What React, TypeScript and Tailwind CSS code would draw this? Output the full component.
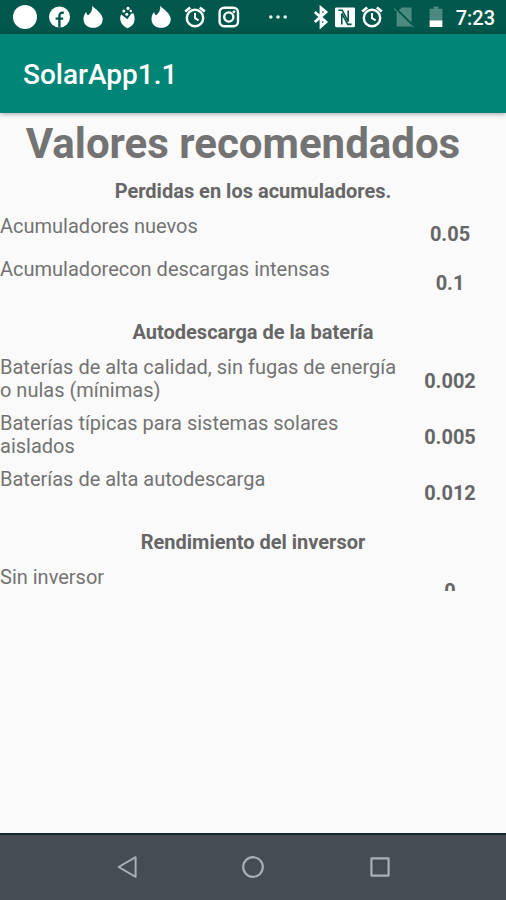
import type { ReactNode } from 'react';

type Row = { label: string; value: string; compact?: boolean };

const sections: { title: string; rows: Row[] }[] = [
  {
    title: "Perdidas en los acumuladores.",
    rows: [
      { label: "Acumuladores nuevos", value: "0.05", compact: true },
      { label: "Acumuladorecon descargas intensas", value: "0.1" }
    ]
  },
  {
    title: "Autodescarga de la batería",
    rows: [
      { label: "Baterías de alta calidad, sin fugas de energía o nulas (mínimas)", value: "0.002" },
      { label: "Baterías típicas para sistemas solares aislados", value: "0.005" },
      { label: "Baterías de alta autodescarga", value: "0.012" }
    ]
  },
  {
    title: "Rendimiento del inversor",
    rows: [
      { label: "Sin inversor", value: "0" }
    ]
  }
];

const Icon = ({ children }: { children: ReactNode }) => (
  <svg viewBox="0 0 24 24" className="h-6 w-6 shrink-0" fill="none" aria-hidden="true">
    {children}
  </svg>
);

const Facebook = () => (
  <Icon>
    <circle cx="12.5" cy="12" r="10.5" fill="#fff" />
    <path d="M12.4 22.5V11c0-2.4 1.2-3.6 4.4-3.2M8.6 13.6h7.6" stroke="#00574b" strokeWidth="2.4" />
  </Icon>
);

const Flame = () => (
  <Icon>
    <path
      d="M11.4.8c1.4 2 3.8 3.4 6 5.6 2.6 2.4 4.3 4.8 4.3 7.8 0 5-4.1 8.6-9.5 8.6s-9.7-3.6-9.7-8.6c0-3 .9-5.4 2.7-7.2.2 1.6.8 2.6 1.9 3.2 2.7-1.8 4.5-5 4.3-9.4z"
      fill="#fff"
    />
  </Icon>
);

const Pouch = () => (
  <Icon>
    <path
      d="M6.2 9.4c-1.2 2-1.3 4.400-.5 6.800.9 3 3.300 5.600 6.800 7 3.600-1.200 6.200-3.800 6.900-7.200.5-2.800.1-5.600-1.300-8l-1.900.8-3.800 5.400z"
      fill="#fff"
    />
    <circle cx="8.8" cy="6" r="1.5" fill="#fff" />
    <circle cx="13" cy="3.4" r="1.6" fill="#fff" />
    <circle cx="11.8" cy="9.2" r="1.5" fill="#fff" />
    <circle cx="15.8" cy="6" r="1.2" fill="#fff" />
  </Icon>
);

const Alarm = () => (
  <Icon>
    <circle cx="12" cy="13" r="8.2" stroke="#fff" strokeWidth="2.4" />
    <path d="M12 8v5.2l3.6 2.2" stroke="#fff" strokeWidth="2" />
    <path d="M2.2 6.6L7.2 2.4M21.8 6.6L16.8 2.4" stroke="#fff" strokeWidth="2.6" />
  </Icon>
);

const Instagram = () => (
  <Icon>
    <rect x="2.6" y="2.8" width="18.4" height="18.4" rx="4.5" stroke="#fff" strokeWidth="2.4" />
    <circle cx="11.8" cy="12" r="4.6" stroke="#fff" strokeWidth="2.4" />
    <circle cx="17" cy="6.8" r="1.4" fill="#fff" />
  </Icon>
);

const More = () => (
  <Icon>
    <circle cx="4.8" cy="12" r="1.8" fill="#e5efed" />
    <circle cx="12" cy="12" r="1.8" fill="#e5efed" />
    <circle cx="19.2" cy="12" r="1.8" fill="#e5efed" />
  </Icon>
);

const Bluetooth = () => (
  <Icon>
    <path d="M5.8 7l11.2 10-5 4.4V2.8L17 7 5.8 17" stroke="#fff" strokeWidth="2.8" />
  </Icon>
);

const Nfc = () => (
  <Icon>
    <rect x="2" y="2.4" width="20" height="19.8" rx="1.4" fill="#fff" />
    <path d="M5.4 5.2h3.8l6 11.4V5.6" stroke="#00574b" strokeWidth="1.6" />
    <path d="M18.6 19.4h-3.8L8.800 8.400v11" stroke="#00574b" strokeWidth="1.6" />
  </Icon>
);

const NoSim = () => (
  <Icon>
    <path d="M9.6 2.6h10v18.8H4.6V7.8z" fill="#4c8a81" />
    <path d="M2.4 3.6l19 18.6" stroke="#4c8a81" strokeWidth="1.4" />
    <path d="M3.6 3.2l18 17.6" stroke="#00574b" strokeWidth="1.8" />
  </Icon>
);

const Battery = () => (
  <Icon>
    <path d="M9.6 1.6h4.8v2.2h4v11.6H5.600V3.800h4z" fill="#4c8a81" />
    <path d="M5.6 15.4h12.8V22H5.600z" fill="#fff" />
  </Icon>
);

const StatusBar = () => (
  <div className="flex h-[34px] shrink-0 items-center justify-between bg-[#00574b] pl-2 pr-[11px]">
    <div className="flex items-center">
      <div className="flex items-center gap-[10px] pl-[5px]">
        <Icon>
          <circle cx="12" cy="12" r="12" fill="#fff" />
        </Icon>
        <Facebook />
        <Flame />
        <Pouch />
        <Flame />
        <Alarm />
        <Instagram />
      </div>
      <div className="pl-[25px]">
        <More />
      </div>
    </div>
    <div className="flex items-center">
      <Bluetooth />
      <Nfc />
      <div className="flex gap-2 pl-[3px] pr-2">
        <Alarm />
        <NoSim />
        <Battery />
      </div>
      <span className="pt-[2px] text-[20px] leading-6 font-medium text-white">7:23</span>
    </div>
  </div>
);

const navButton = "flex w-1/4 items-center justify-center";

const NavBar = () => (
  <nav className="flex h-[67px] shrink-0 justify-center border-t-2 border-[#15292c] bg-[#464d52] pb-[2px]">
    <button type="button" aria-label="Atrás" className={navButton}>
      <svg viewBox="0 0 24 24" className="h-6 w-6" fill="none" stroke="#a9b0b2" strokeWidth="2" strokeLinejoin="round">
        <path d="M20.6 2.2v19.6L3.6 12z" />
      </svg>
    </button>
    <button type="button" aria-label="Inicio" className={navButton}>
      <svg viewBox="0 0 24 24" className="h-6 w-6" fill="none" stroke="#a9b0b2" strokeWidth="2.2">
        <circle cx="12" cy="12" r="9.8" />
      </svg>
    </button>
    <button type="button" aria-label="Recientes" className={navButton}>
      <svg viewBox="0 0 24 24" className="h-6 w-6" fill="none" stroke="#a9b0b2" strokeWidth="2.2" strokeLinejoin="round">
        <rect x="3.4" y="3.4" width="17.2" height="17.2" />
      </svg>
    </button>
  </nav>
);

const App = () => {
  return (
    <div className="flex min-h-screen flex-col bg-[#fafafa] font-['Roboto',sans-serif] text-[#737373]">
      <StatusBar />

      <header className="relative flex h-[79px] shrink-0 items-center bg-[#008577] px-[23px] pt-[2px] shadow-[0_1px_5px_rgba(0,0,0,0.35)]">
        <span className="text-[28px] leading-8 font-medium text-white">SolarApp1.1</span>
      </header>

      <main className="flex-1">
        <h1 className="pt-[7px] pr-5 text-center text-[42px] leading-[48px] font-bold">Valores recomendados</h1>

        {/* Visible part of the list, the rest stays cut off below */}
        <div className="mt-3 max-h-[411px] overflow-hidden">
          <table className="w-full table-fixed border-collapse text-[20px] leading-[23px]">
            <colgroup>
              <col />
              <col className="w-[104px]" />
            </colgroup>
            {sections.map((section) => (
              <tbody key={section.title}>
                <tr>
                  <th colSpan={2} scope="colgroup" className="h-[35px] p-0 text-center align-top font-bold text-[#666666]">
                    {section.title}
                  </th>
                </tr>
                {section.rows.map((row) => (
                  <tr key={row.label} className={row.compact ? "h-[43px]" : "h-14"}>
                    <td className="p-0 align-top">{row.label}</td>
                    <td className={row.compact ? "p-0 pt-2 pr-2 text-center align-top font-bold text-[#666666]" : "p-0 pt-[14px] pr-2 text-center align-top font-bold text-[#666666]"}>
                      {row.value}
                    </td>
                  </tr>
                ))}
                <tr aria-hidden="true">
                  <td colSpan={2} className="h-[7px] p-0"></td>
                </tr>
              </tbody>
            ))}
          </table>
        </div>
      </main>

      <NavBar />
    </div>
  );
};

export default App;
